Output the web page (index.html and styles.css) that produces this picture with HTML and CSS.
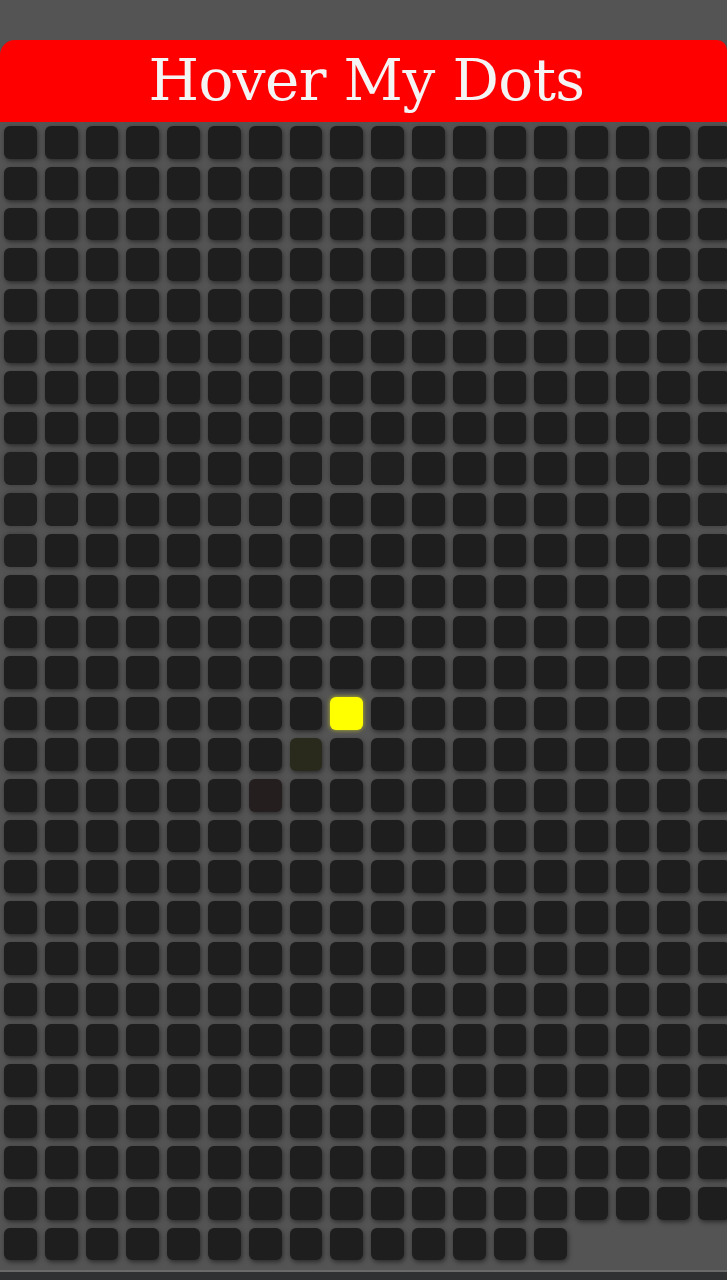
FILE: index.html
```html
<!DOCTYPE html>
<html lang="en">
<head>
<meta charset="utf-8">
<title>Hover My Dots</title>
<link rel="stylesheet" href="styles.css">
</head>
<body>
<div class="page">
  <header class="banner"><h1 class="title">Hover My Dots</h1></header>
  <main class="grid">
    <i class="dot"></i><i class="dot"></i><i class="dot"></i><i class="dot"></i><i class="dot"></i><i class="dot"></i><i class="dot"></i><i class="dot"></i><i class="dot"></i><i class="dot"></i>
    <i class="dot"></i><i class="dot"></i><i class="dot"></i><i class="dot"></i><i class="dot"></i><i class="dot"></i><i class="dot"></i><i class="dot"></i><i class="dot"></i><i class="dot"></i>
    <i class="dot"></i><i class="dot"></i><i class="dot"></i><i class="dot"></i><i class="dot"></i><i class="dot"></i><i class="dot"></i><i class="dot"></i><i class="dot"></i><i class="dot"></i>
    <i class="dot"></i><i class="dot"></i><i class="dot"></i><i class="dot"></i><i class="dot"></i><i class="dot"></i><i class="dot"></i><i class="dot"></i><i class="dot"></i><i class="dot"></i>
    <i class="dot"></i><i class="dot"></i><i class="dot"></i><i class="dot"></i><i class="dot"></i><i class="dot"></i><i class="dot"></i><i class="dot"></i><i class="dot"></i><i class="dot"></i>
    <i class="dot"></i><i class="dot"></i><i class="dot"></i><i class="dot"></i><i class="dot"></i><i class="dot"></i><i class="dot"></i><i class="dot"></i><i class="dot"></i><i class="dot"></i>
    <i class="dot"></i><i class="dot"></i><i class="dot"></i><i class="dot"></i><i class="dot"></i><i class="dot"></i><i class="dot"></i><i class="dot"></i><i class="dot"></i><i class="dot"></i>
    <i class="dot"></i><i class="dot"></i><i class="dot"></i><i class="dot"></i><i class="dot"></i><i class="dot"></i><i class="dot"></i><i class="dot"></i><i class="dot"></i><i class="dot"></i>
    <i class="dot"></i><i class="dot"></i><i class="dot"></i><i class="dot"></i><i class="dot"></i><i class="dot"></i><i class="dot"></i><i class="dot"></i><i class="dot"></i><i class="dot"></i>
    <i class="dot"></i><i class="dot"></i><i class="dot"></i><i class="dot"></i><i class="dot"></i><i class="dot"></i><i class="dot"></i><i class="dot"></i><i class="dot"></i><i class="dot"></i>
    <i class="dot"></i><i class="dot"></i><i class="dot"></i><i class="dot"></i><i class="dot"></i><i class="dot"></i><i class="dot"></i><i class="dot"></i><i class="dot"></i><i class="dot"></i>
    <i class="dot"></i><i class="dot"></i><i class="dot"></i><i class="dot"></i><i class="dot"></i><i class="dot"></i><i class="dot"></i><i class="dot"></i><i class="dot"></i><i class="dot"></i>
    <i class="dot"></i><i class="dot"></i><i class="dot"></i><i class="dot"></i><i class="dot"></i><i class="dot"></i><i class="dot"></i><i class="dot"></i><i class="dot"></i><i class="dot"></i>
    <i class="dot"></i><i class="dot"></i><i class="dot"></i><i class="dot"></i><i class="dot"></i><i class="dot"></i><i class="dot"></i><i class="dot"></i><i class="dot"></i><i class="dot"></i>
    <i class="dot"></i><i class="dot"></i><i class="dot"></i><i class="dot"></i><i class="dot soft"></i><i class="dot"></i><i class="dot"></i><i class="dot"></i><i class="dot"></i><i class="dot"></i>
    <i class="dot"></i><i class="dot soft"></i><i class="dot soft"></i><i class="dot soft"></i><i class="dot"></i><i class="dot"></i><i class="dot"></i><i class="dot"></i><i class="dot"></i><i class="dot soft"></i>
    <i class="dot"></i><i class="dot"></i><i class="dot soft"></i><i class="dot soft"></i><i class="dot"></i><i class="dot"></i><i class="dot"></i><i class="dot soft"></i><i class="dot soft"></i><i class="dot"></i>
    <i class="dot"></i><i class="dot"></i><i class="dot"></i><i class="dot"></i><i class="dot"></i><i class="dot"></i><i class="dot"></i><i class="dot"></i><i class="dot"></i><i class="dot soft"></i>
    <i class="dot soft"></i><i class="dot"></i><i class="dot"></i><i class="dot"></i><i class="dot"></i><i class="dot"></i><i class="dot"></i><i class="dot"></i><i class="dot"></i><i class="dot"></i>
    <i class="dot"></i><i class="dot"></i><i class="dot"></i><i class="dot"></i><i class="dot"></i><i class="dot"></i><i class="dot"></i><i class="dot"></i><i class="dot"></i><i class="dot"></i>
    <i class="dot"></i><i class="dot"></i><i class="dot"></i><i class="dot"></i><i class="dot"></i><i class="dot"></i><i class="dot"></i><i class="dot"></i><i class="dot"></i><i class="dot"></i>
    <i class="dot"></i><i class="dot"></i><i class="dot"></i><i class="dot"></i><i class="dot"></i><i class="dot"></i><i class="dot"></i><i class="dot"></i><i class="dot"></i><i class="dot"></i>
    <i class="dot"></i><i class="dot"></i><i class="dot"></i><i class="dot"></i><i class="dot"></i><i class="dot"></i><i class="dot"></i><i class="dot"></i><i class="dot"></i><i class="dot"></i>
    <i class="dot"></i><i class="dot"></i><i class="dot"></i><i class="dot"></i><i class="dot"></i><i class="dot"></i><i class="dot"></i><i class="dot"></i><i class="dot"></i><i class="dot"></i>
    <i class="dot"></i><i class="dot"></i><i class="dot"></i><i class="dot"></i><i class="dot"></i><i class="dot"></i><i class="dot"></i><i class="dot"></i><i class="dot"></i><i class="dot"></i>
    <i class="dot"></i><i class="dot"></i><i class="dot"></i><i class="dot"></i><i class="dot"></i><i class="dot"></i><i class="dot"></i><i class="dot"></i><i class="dot"></i><i class="dot"></i>
    <i class="dot lit"></i><i class="dot"></i><i class="dot"></i><i class="dot"></i><i class="dot"></i><i class="dot"></i><i class="dot"></i><i class="dot"></i><i class="dot"></i><i class="dot"></i>
    <i class="dot"></i><i class="dot"></i><i class="dot"></i><i class="dot"></i><i class="dot"></i><i class="dot"></i><i class="dot"></i><i class="dot olive"></i><i class="dot"></i><i class="dot"></i>
    <i class="dot"></i><i class="dot"></i><i class="dot"></i><i class="dot"></i><i class="dot"></i><i class="dot"></i><i class="dot"></i><i class="dot"></i><i class="dot"></i><i class="dot"></i>
    <i class="dot"></i><i class="dot"></i><i class="dot"></i><i class="dot"></i><i class="dot rust"></i><i class="dot"></i><i class="dot"></i><i class="dot"></i><i class="dot"></i><i class="dot"></i>
    <i class="dot"></i><i class="dot"></i><i class="dot"></i><i class="dot"></i><i class="dot"></i><i class="dot"></i><i class="dot"></i><i class="dot"></i><i class="dot"></i><i class="dot"></i>
    <i class="dot"></i><i class="dot"></i><i class="dot"></i><i class="dot"></i><i class="dot"></i><i class="dot"></i><i class="dot"></i><i class="dot"></i><i class="dot"></i><i class="dot"></i>
    <i class="dot"></i><i class="dot"></i><i class="dot"></i><i class="dot"></i><i class="dot"></i><i class="dot"></i><i class="dot"></i><i class="dot"></i><i class="dot"></i><i class="dot"></i>
    <i class="dot"></i><i class="dot"></i><i class="dot"></i><i class="dot"></i><i class="dot"></i><i class="dot"></i><i class="dot"></i><i class="dot"></i><i class="dot"></i><i class="dot"></i>
    <i class="dot"></i><i class="dot"></i><i class="dot"></i><i class="dot"></i><i class="dot"></i><i class="dot"></i><i class="dot"></i><i class="dot"></i><i class="dot"></i><i class="dot"></i>
    <i class="dot"></i><i class="dot"></i><i class="dot"></i><i class="dot"></i><i class="dot"></i><i class="dot"></i><i class="dot"></i><i class="dot"></i><i class="dot"></i><i class="dot"></i>
    <i class="dot"></i><i class="dot"></i><i class="dot"></i><i class="dot"></i><i class="dot"></i><i class="dot"></i><i class="dot"></i><i class="dot"></i><i class="dot"></i><i class="dot"></i>
    <i class="dot"></i><i class="dot"></i><i class="dot"></i><i class="dot"></i><i class="dot"></i><i class="dot"></i><i class="dot"></i><i class="dot"></i><i class="dot"></i><i class="dot"></i>
    <i class="dot"></i><i class="dot"></i><i class="dot"></i><i class="dot"></i><i class="dot"></i><i class="dot"></i><i class="dot"></i><i class="dot"></i><i class="dot"></i><i class="dot"></i>
    <i class="dot"></i><i class="dot"></i><i class="dot"></i><i class="dot"></i><i class="dot"></i><i class="dot"></i><i class="dot"></i><i class="dot"></i><i class="dot"></i><i class="dot"></i>
    <i class="dot"></i><i class="dot"></i><i class="dot"></i><i class="dot"></i><i class="dot"></i><i class="dot"></i><i class="dot"></i><i class="dot"></i><i class="dot"></i><i class="dot"></i>
    <i class="dot"></i><i class="dot"></i><i class="dot"></i><i class="dot"></i><i class="dot"></i><i class="dot"></i><i class="dot"></i><i class="dot"></i><i class="dot"></i><i class="dot"></i>
    <i class="dot"></i><i class="dot"></i><i class="dot"></i><i class="dot"></i><i class="dot"></i><i class="dot"></i><i class="dot"></i><i class="dot"></i><i class="dot"></i><i class="dot"></i>
    <i class="dot"></i><i class="dot"></i><i class="dot"></i><i class="dot"></i><i class="dot"></i><i class="dot"></i><i class="dot"></i><i class="dot"></i><i class="dot"></i><i class="dot"></i>
    <i class="dot"></i><i class="dot"></i><i class="dot"></i><i class="dot"></i><i class="dot"></i><i class="dot"></i><i class="dot"></i><i class="dot"></i><i class="dot"></i><i class="dot"></i>
    <i class="dot"></i><i class="dot"></i><i class="dot"></i><i class="dot"></i><i class="dot"></i><i class="dot"></i><i class="dot"></i><i class="dot"></i><i class="dot"></i><i class="dot"></i>
    <i class="dot"></i><i class="dot"></i><i class="dot"></i><i class="dot"></i><i class="dot"></i><i class="dot"></i><i class="dot"></i><i class="dot"></i><i class="dot"></i><i class="dot"></i>
    <i class="dot"></i><i class="dot"></i><i class="dot"></i><i class="dot"></i><i class="dot"></i><i class="dot"></i><i class="dot"></i><i class="dot"></i><i class="dot"></i><i class="dot"></i>
    <i class="dot"></i><i class="dot"></i><i class="dot"></i><i class="dot"></i><i class="dot"></i><i class="dot"></i><i class="dot"></i><i class="dot"></i><i class="dot"></i><i class="dot"></i>
    <i class="dot"></i><i class="dot"></i><i class="dot"></i><i class="dot"></i><i class="dot"></i><i class="dot"></i><i class="dot"></i><i class="dot"></i><i class="dot"></i><i class="dot"></i>
  </main>
</div>
</body>
</html>
```
FILE: styles.css
```css
html {
  background: #2f3032;
}
body {
  margin: 0;
  overflow: hidden;
  height: 1280px;
}
.page {
  background: #545454;
  padding-top: 40px;
  border-bottom: 2px solid #6a6a6a;
  height: 1230px;
}
.banner {
  background: #ff0000;
  height: 82px;
  border-radius: 15px 10px 0 0;
  display: flex;
  align-items: center;
  justify-content: center;
}
.title {
  margin: 0;
  color: #f4f4f4;
  font-family: "DejaVu Serif", "Liberation Serif", serif;
  font-weight: normal;
  font-size: 58px;
  letter-spacing: -0.6px;
  line-height: 1;
  padding-left: 6px;
  padding-bottom: 2px;
}
.grid {
  width: 738px;
  box-sizing: border-box;
  padding: 4px;
  display: grid;
  grid-template-columns: repeat(18, 32.8px);
  grid-auto-rows: 32.8px;
  gap: 8px;
}
.dot {
  display: block;
  border-radius: 6px;
  background: #1e1e1e;
  box-shadow: 1px 2px 5px rgba(0, 0, 0, 0.5);
}
.dot.soft {
  background: #202020;
  box-shadow: 0 0 6px rgba(0, 0, 0, 0.35);
}
.dot.lit {
  background: #ffff00;
  box-shadow: 0 0 4px rgba(255, 255, 0, 0.6);
}
.dot.olive {
  background: #2a2a1c;
}
.dot.rust {
  background: #251e1e;
}
```
